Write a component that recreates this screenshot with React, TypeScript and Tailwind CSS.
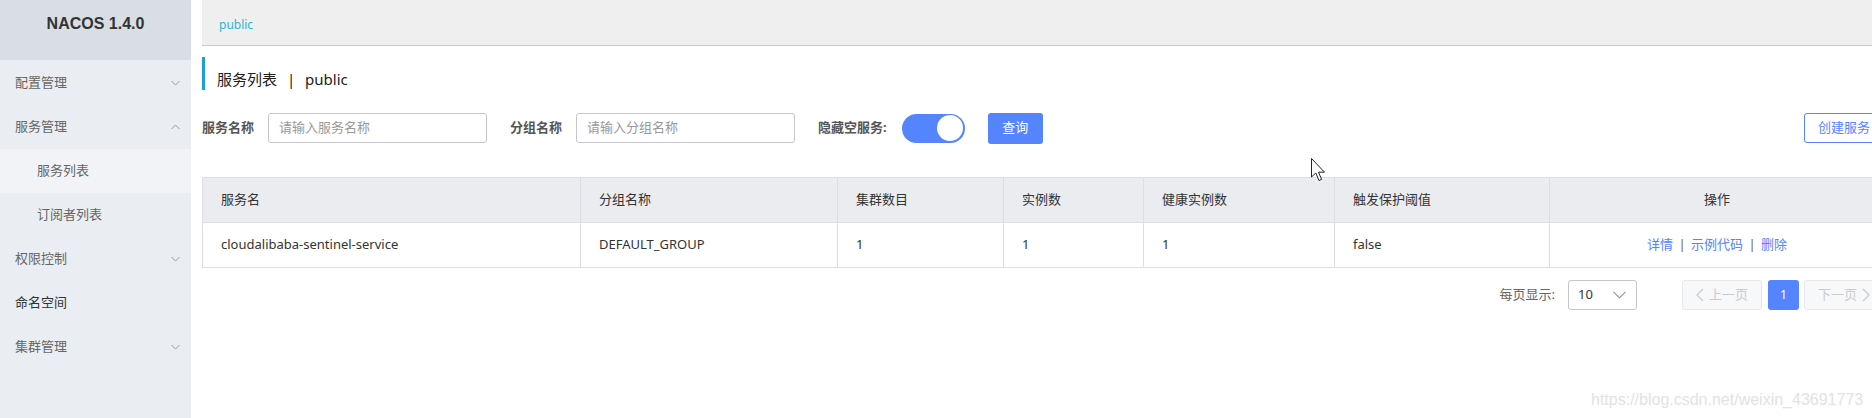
import React from 'react';

const font = { fontFamily: '"Noto Sans", "Noto Sans CJK SC", sans-serif' };

const Chevron = ({ up = false }: { up?: boolean }) => (
    <svg width="9" height="6" viewBox="0 0 9 6" className="text-[#999]">
        <path d={up ? 'M0.5 5 L4.5 1 L8.5 5' : 'M0.5 1 L4.5 5 L8.5 1'} fill="none" stroke="currentColor" strokeWidth="1" />
    </svg>
);

const menu = [
    { label: '配置管理', arrow: 'down' },
    { label: '服务管理', arrow: 'up' },
    { label: '服务列表', sub: true, active: true },
    { label: '订阅者列表', sub: true },
    { label: '权限控制', arrow: 'down' },
    { label: '命名空间', dark: true },
    { label: '集群管理', arrow: 'down' },
];

const columns = [
    { title: '服务名', w: 'w-[378px]' },
    { title: '分组名称', w: 'w-[257px]' },
    { title: '集群数目', w: 'w-[166px]' },
    { title: '实例数', w: 'w-[140px]' },
    { title: '健康实例数', w: 'w-[191px]' },
    { title: '触发保护阈值', w: 'w-[215px]' },
    { title: '操作', w: 'w-[335px]', center: true },
];

const rows = [
    { name: 'cloudalibaba-sentinel-service', group: 'DEFAULT_GROUP', clusters: 1, instances: 1, healthy: 1, threshold: 'false' },
];

const Sidebar = () => (
    <div className="w-[191px] shrink-0 h-full bg-[#eaedf1]">
        <div className="h-[60px] bg-[#d9dee5] pt-[11px] text-center">
            <span className="text-[16px] font-bold text-[#333] leading-[22px]" style={{ fontFamily: '"Liberation Sans", sans-serif' }}>NACOS 1.4.0</span>
        </div>
        <div className="pt-[1px]">
            {menu.map((m) => (
                <div
                    key={m.label}
                    className={`h-[44px] flex items-center justify-between text-[13px] pr-[11px] ${m.sub ? 'pl-[37px]' : 'pl-[15px]'} ${m.active ? 'bg-[#f2f3f7]' : ''} ${m.dark ? 'text-[#333]' : 'text-[#666]'}`}
                >
                    <span>{m.label}</span>
                    {m.arrow && <Chevron up={m.arrow === 'up'} />}
                </div>
            ))}
        </div>
    </div>
);

const Toolbar = () => (
    <div className="mt-[22px] flex items-center h-[32px] text-[13px]">
        <span className="w-[66px] font-bold text-[#555]">服务名称</span>
        <div className="w-[219px] h-[30px] border border-[#c4c6cf] rounded-[3px] flex items-center pl-[10px] text-[#999]">请输入服务名称</div>
        <span className="ml-[23px] w-[66px] font-bold text-[#555]">分组名称</span>
        <div className="w-[219px] h-[30px] border border-[#c4c6cf] rounded-[3px] flex items-center pl-[10px] text-[#999]">请输入分组名称</div>
        <span className="ml-[23px] font-bold text-[#555]">隐藏空服务:</span>
        <div className="ml-[15px] w-[63px] h-[29px] rounded-full bg-[#5584ff] flex items-center justify-end pr-[2px]">
            <div className="w-[26px] h-[26px] rounded-full bg-white" />
        </div>
        <button className="ml-[23px] w-[55px] h-[31px] rounded-[3px] bg-[#5584ff] text-white text-[13px]">查询</button>
        <div className="flex-1" />
        <button className="w-[80px] h-[30px] rounded-[3px] border border-[#5584ff] bg-white text-[#5584ff] text-[13px]">创建服务</button>
    </div>
);

const ServiceTable = () => (
    <table className="mt-[33px] w-[1682px] table-fixed border-collapse border border-[#dcdee3] text-[13px] text-[#333]">
        <colgroup>
            {columns.map((c) => <col key={c.title} className={c.w} />)}
        </colgroup>
        <thead className="bg-[#ebecf0]">
            <tr className="h-[45px]">
                {columns.map((c) => (
                    <th key={c.title} className={`font-normal border-r border-b border-[#dcdee3] px-[18px] ${c.center ? 'text-center' : 'text-left'}`}>{c.title}</th>
                ))}
            </tr>
        </thead>
        <tbody>
            {rows.map((r) => (
                <tr key={r.name} className="h-[45px]">
                    <td className="px-[18px] border-r border-[#dcdee3]">{r.name}</td>
                    <td className="px-[18px] border-r border-[#dcdee3]">{r.group}</td>
                    <td className="px-[18px] border-r border-[#dcdee3]">{r.clusters}</td>
                    <td className="px-[18px] border-r border-[#dcdee3]">{r.instances}</td>
                    <td className="px-[18px] border-r border-[#dcdee3]">{r.healthy}</td>
                    <td className="px-[18px] border-r border-[#dcdee3]">{r.threshold}</td>
                    <td className="px-[18px] text-center text-[#5584ff]">
                        详情 <span className="text-[#666] px-[2px]">|</span> 示例代码 <span className="text-[#666] px-[2px]">|</span> 删除
                    </td>
                </tr>
            ))}
        </tbody>
    </table>
);

const Pagination = () => (
    <div className="mt-[12px] flex items-center justify-end h-[30px] text-[13px]">
        <span className="text-[#666]">每页显示:</span>
        <div className="ml-[13px] w-[69px] h-[30px] border border-[#c4c6cf] rounded-[3px] flex items-center justify-between pl-[9px] pr-[10px] text-[#333]">
            <span>10</span>
            <svg width="13" height="8" viewBox="0 0 13 8" className="text-[#999]">
                <path d="M0.5 0.8 L6.5 6.8 L12.5 0.8" fill="none" stroke="currentColor" strokeWidth="1.2" />
            </svg>
        </div>
        <div className="ml-[45px] w-[80px] h-[30px] rounded-[3px] border border-[#e6e7eb] bg-[#f7f8fa] flex items-center justify-center gap-[5px] text-[#ccc]">
            <svg width="8" height="14" viewBox="0 0 8 14"><path d="M7 1 L1 7 L7 13" fill="none" stroke="currentColor" strokeWidth="1.3" /></svg>
            <span>上一页</span>
        </div>
        <div className="ml-[6px] w-[31px] h-[30px] rounded-[3px] bg-[#5584ff] text-white flex items-center justify-center">1</div>
        <div className="ml-[5px] w-[80px] h-[30px] rounded-[3px] border border-[#e6e7eb] bg-[#f7f8fa] flex items-center justify-center gap-[5px] text-[#ccc]">
            <span>下一页</span>
            <svg width="8" height="14" viewBox="0 0 8 14"><path d="M1 1 L7 7 L1 13" fill="none" stroke="currentColor" strokeWidth="1.3" /></svg>
        </div>
    </div>
);

export default function App() {
    return (
        <div className="relative w-[1872px] h-[418px] overflow-hidden flex bg-white" style={font}>
            <Sidebar />
            <div className="shrink-0 px-[11px]">
                <div className="w-[1682px]">
                    <div className="h-[46px] bg-[#efefef] border-b border-[#cccccc] pl-[17px] pt-[16px] text-[12px] leading-[18px] text-[#2fb3d6]">public</div>
                    <div className="mt-[11px] h-[33px] border-l-[3px] border-[#1a9fd6] pl-[12px] pt-[12px] text-[15px] leading-[20px] text-[#222]">
                        服务列表 <span className="px-[6px]">|</span> public
                    </div>
                    <Toolbar />
                    <ServiceTable />
                    <Pagination />
                </div>
            </div>

            {/* mouse pointer captured in the screenshot */}
            <svg className="absolute left-[1311px] top-[158px]" width="16" height="24" viewBox="0 0 16 24">
                <path d="M0.5 0.5 L0.5 19 L4.8 15 L8 22.5 L10.6 21.4 L7.5 14.2 L13.5 14.2 Z" fill="white" stroke="#222" strokeWidth="1" />
            </svg>

            <span className="absolute left-[1591px] top-[390px] text-[16px] text-[#e2e2e2] leading-[20px]" style={{ fontFamily: '"Liberation Sans", sans-serif' }}>
                https://blog.csdn.net/weixin_43691773
            </span>
        </div>
    );
}
